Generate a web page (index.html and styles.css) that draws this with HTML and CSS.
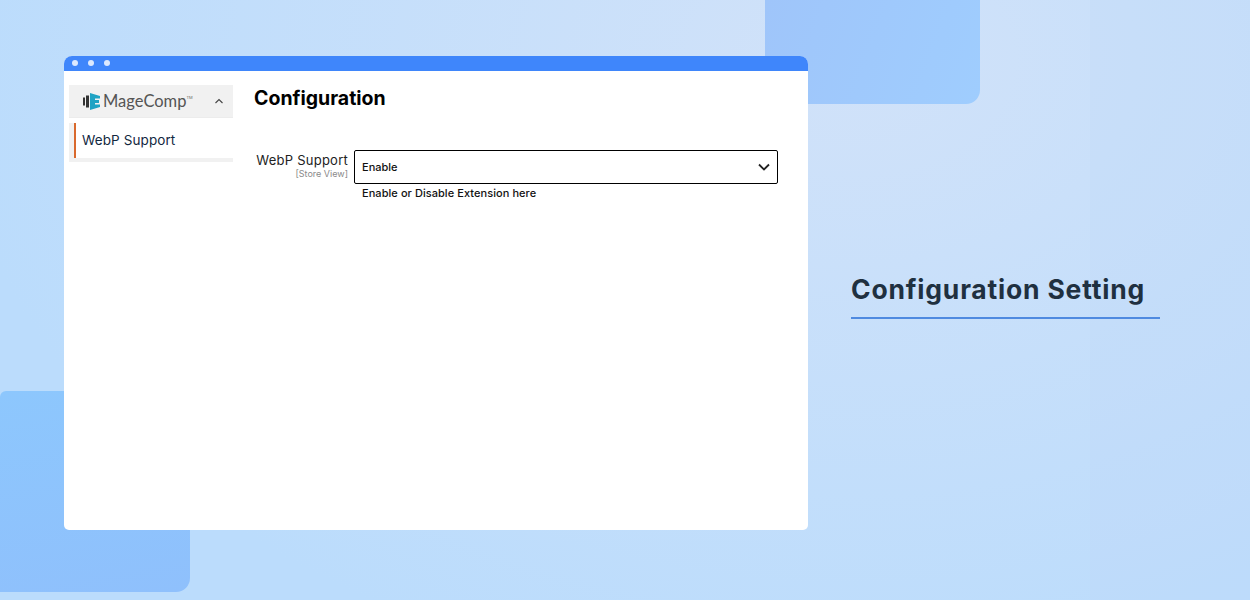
FILE: index.html
```html
<!DOCTYPE html>
<html lang="en">
<head>
<meta charset="UTF-8">
<title>Configuration Setting</title>
<link rel="stylesheet" href="styles.css">
</head>
<body>

<div class="stage">
  <div class="deco deco-top"></div>
  <div class="deco deco-bottom"></div>
  <div class="stripe"></div>

  <div class="window">
    <div class="title-bar">
      <span class="dot"></span>
      <span class="dot"></span>
      <span class="dot"></span>
    </div>
    <div class="window-body">
      <div class="sidebar">
        <div class="brand">
          <svg class="brand-icon" width="18" height="17" viewBox="0 0 18 17">
            <rect x="0" y="4.5" width="2" height="8" fill="#333"/>
            <rect x="3" y="2.5" width="3" height="12" fill="#333"/>
            <path d="M7 0 L17 3 V5.5 H12 V7 H16 V10 H12 V11.5 H17 V14 L7 17 Z" fill="#1fa3c4"/>
          </svg>
          <span class="brand-name">MageComp</span><span class="brand-tm">TM</span>
          <svg class="brand-caret" width="10" height="6" viewBox="0 0 10 6">
            <path d="M1.5 5 L5 1.5 L8.5 5" fill="none" stroke="#444" stroke-width="1.1"/>
          </svg>
        </div>
        <div class="menu-item"><span class="menu-text">WebP Support</span></div>
      </div>
      <div class="content">
        <h1 class="content-title">Configuration</h1>
        <div class="field">
          <div class="field-label">
            <div class="label-name">WebP Support</div>
            <div class="label-scope">[Store View]</div>
          </div>
          <div class="field-control">
            <div class="select-box">
              <span>Enable</span>
              <svg width="12" height="8" viewBox="0 0 12 8">
                <path d="M1 1.5 L6 6.5 L11 1.5" fill="none" stroke="#222" stroke-width="1.8"/>
              </svg>
            </div>
            <div class="field-note">Enable or Disable Extension here</div>
          </div>
        </div>
      </div>
    </div>
  </div>

  <div class="side-title">
    <h2>Configuration Setting</h2>
  </div>
</div>

</body>
</html>
```

FILE: styles.css
```css
html, body {
  margin: 0;
  padding: 0;
}
body {
  font-family: "Inter", "Noto Sans", sans-serif;
  overflow: hidden;
}
.stage {
  position: relative;
  width: 1250px;
  height: 600px;
  box-sizing: border-box;
  padding: 56px 0 70px 64px;
  display: flex;
  overflow: hidden;
  background: radial-gradient(ellipse 900px 640px at 850px 60px, #d1e2f9 0%, #bbdcfc 100%);
}
.deco {
  position: absolute;
}
.deco-top {
  left: 765px;
  top: 0;
  width: 215px;
  height: 104px;
  border-radius: 0 0 14px 0;
  background: linear-gradient(110deg, #9fc5fa, #9fcdfe);
}
.deco-bottom {
  left: 0;
  top: 391px;
  width: 190px;
  height: 201px;
  border-radius: 6px 0 14px 0;
  background: linear-gradient(170deg, #8dc7fd, #8fc0fc);
}
.stripe {
  position: absolute;
  left: 1090px;
  top: 0;
  width: 160px;
  height: 600px;
  background: rgba(190, 215, 247, 0.25);
}

/* browser window */
.window {
  position: relative;
  width: 744px;
  height: 474px;
  background: #fff;
  border-radius: 8px 8px 5px 5px;
  overflow: hidden;
  flex-shrink: 0;
}
.title-bar {
  height: 15px;
  box-sizing: border-box;
  padding: 0 0 1px 8px;
  background: #3f86fb;
  display: flex;
  align-items: center;
  gap: 10px;
}
.dot {
  width: 6px;
  height: 6px;
  border-radius: 50%;
  background: #dbe8fe;
}
.window-body {
  display: flex;
}

/* sidebar */
.sidebar {
  width: 164px;
  margin: 14px 0 0 5px;
}
.brand {
  height: 33px;
  background: #f1f1f1;
  display: flex;
  align-items: center;
  padding-left: 14px;
  box-sizing: border-box;
  border-bottom: 1px solid #ececec;
}
.brand-icon {
  margin-right: 2px;
}
.brand-name {
  font-family: "Lato", sans-serif;
  font-size: 16.5px;
  color: #555;
}
.brand-tm {
  font-size: 4px;
  color: #666;
  margin: -8px 0 0 0;
}
.brand-caret {
  margin-left: auto;
  margin-right: 9px;
}
.menu-item {
  margin-top: 5px;
  padding-left: 5px;
  background: #f1f1f1;
  padding-bottom: 4px;
}
.menu-text {
  display: block;
  height: 35px;
  line-height: 35px;
  padding-left: 6px;
  background: #fff;
  border-left: 2px solid #d9692d;
  font-size: 13.5px;
  letter-spacing: 0.1px;
  color: #12283f;
}

/* form */
.content {
  flex: 1;
  padding-left: 21px;
}
.content-title {
  margin: 15px 0 0 0;
  font-size: 19.5px;
  line-height: 24px;
  font-weight: 700;
  color: #000;
}
.field {
  display: flex;
  margin-top: 40px;
}
.field-label {
  width: 94px;
  text-align: right;
  margin-right: 6px;
  padding-top: 3px;
}
.label-name {
  font-size: 13px;
  line-height: 15px;
  letter-spacing: 0.25px;
  color: #222;
}
.label-scope {
  font-size: 9px;
  line-height: 12px;
  color: #8a8a8a;
}
.field-control {
  width: 424px;
}
.select-box {
  height: 34px;
  box-sizing: border-box;
  border: 1.5px solid #000;
  border-radius: 2px;
  display: flex;
  align-items: center;
  justify-content: space-between;
  padding: 0 7px 0 7px;
  font-size: 11px;
  font-weight: 500;
  color: #111;
}
.field-note {
  font-size: 11px;
  font-weight: 500;
  line-height: 14px;
  letter-spacing: 0.06px;
  margin: 2px 0 0 8px;
  color: #111;
}

/* right heading */
.side-title {
  position: relative;
  margin: 216px 0 0 43px;
  width: 309px;
  height: 47px;
  border-bottom: 2px solid #4f8ae0;
  box-sizing: border-box;
}
.side-title h2 {
  margin: 0;
  font-size: 26.5px;
  line-height: 34px;
  font-weight: 700;
  letter-spacing: 0.8px;
  color: #1f3040;
  white-space: nowrap;
}
```
